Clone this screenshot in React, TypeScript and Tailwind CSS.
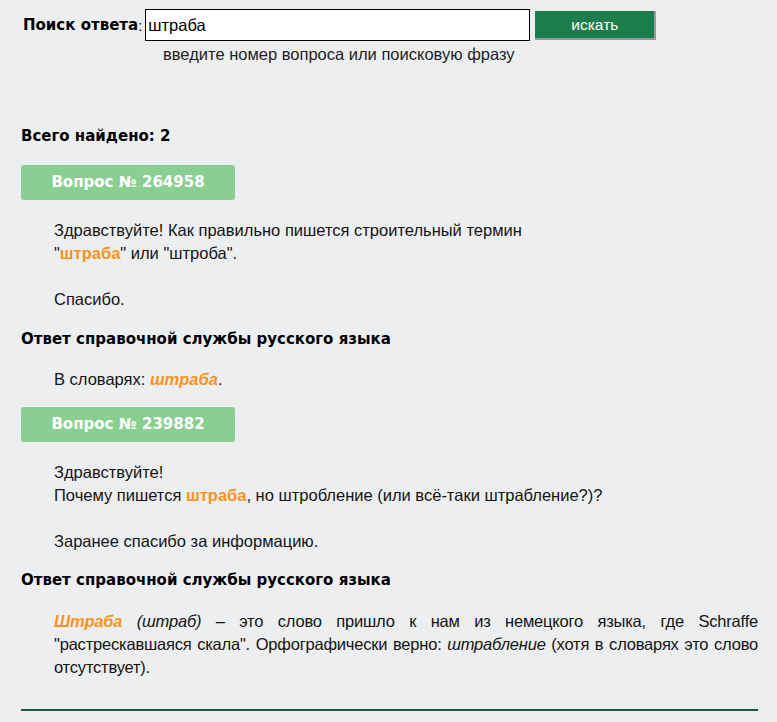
import React from 'react'

const Hl: React.FC<{ children: React.ReactNode; italic?: boolean }> = ({ children, italic }) => (
  <b className={'font-bold text-[#f7941d]' + (italic ? ' italic' : '')}>{children}</b>
)

const Badge: React.FC<{ num: string }> = ({ num }) => (
  <div className="w-[214px] h-[35px] bg-[#88cf91] rounded-[3px] flex items-center justify-center text-white font-bold text-[15px] font-['DejaVu_Sans',sans-serif]">
    Вопрос № {num}
  </div>
)

const Heading: React.FC<{ children: React.ReactNode }> = ({ children }) => (
  <div className="font-bold text-[15px] text-black font-['DejaVu_Sans',sans-serif]">{children}</div>
)

export default function App() {
  return (
    <div className="min-h-screen bg-[#edeef0] text-[#141414] font-['Liberation_Sans',Arial,sans-serif] text-[16.5px] leading-[23px]">
      {/* Search form */}
      <div className="pt-[9px] pl-[23px]">
        <div className="flex items-center">
          <span className="font-bold text-[15px] text-black font-['DejaVu_Sans',sans-serif]">Поиск ответа</span>
          <span className="text-[15px] text-black">:</span>
          <input
            type="text"
            defaultValue="штраба"
            className="ml-[3px] w-[385px] h-[32px] bg-white border border-black px-[2px] text-[16.5px] text-black outline-none"
          />
          <button className="ml-[5px] w-[121px] h-[29px] bg-[#1d7d4c] border-r-2 border-b-2 border-[#9a9a9a] text-white text-[15.5px]">
            искать
          </button>
        </div>
        <div className="pl-[140px] mt-[2px] text-[#222]">введите номер вопроса или поисковую фразу</div>
      </div>

      <div className="pl-[21px] pr-[19px] mt-[59px]">
        <Heading>Всего найдено: 2</Heading>

        <div className="mt-[17px]">
          <Badge num="264958" />
        </div>
        <div className="pl-[33px] mt-[19px]">
          <p>
            Здравствуйте! Как правильно пишется строительный термин
            <br />
            "<Hl>штраба</Hl>" или "штроба".
          </p>
          <p className="mt-[23px]">Спасибо.</p>
        </div>
        <div className="mt-[17px]">
          <Heading>Ответ справочной службы русского языка</Heading>
        </div>
        <p className="pl-[33px] mt-[17px]">
          В словарях: <Hl italic>штраба</Hl>.
        </p>

        <div className="mt-[16px]">
          <Badge num="239882" />
        </div>
        <div className="pl-[33px] mt-[19px]">
          <p>
            Здравствуйте!
            <br />
            Почему пишется <Hl>штраба</Hl>, но штробление (или всё-таки штрабление?)?
          </p>
          <p className="mt-[23px]">Заранее спасибо за информацию.</p>
        </div>
        <div className="mt-[16px]">
          <Heading>Ответ справочной службы русского языка</Heading>
        </div>
        <p className="pl-[33px] mt-[18px] text-justify tracking-[-0.2px]">
          <Hl italic>Штраба</Hl> <i>(штраб)</i> – это слово пришло к нам из немецкого языка, где Schraffe
          "растрескавшаяся скала". Орфографически верно: <i>штрабление</i> (хотя в словарях это слово
          отсутствует).
        </p>

        <div className="mt-[30px] h-[2px] bg-[#1f5a3f]" />
      </div>
    </div>
  )
}
